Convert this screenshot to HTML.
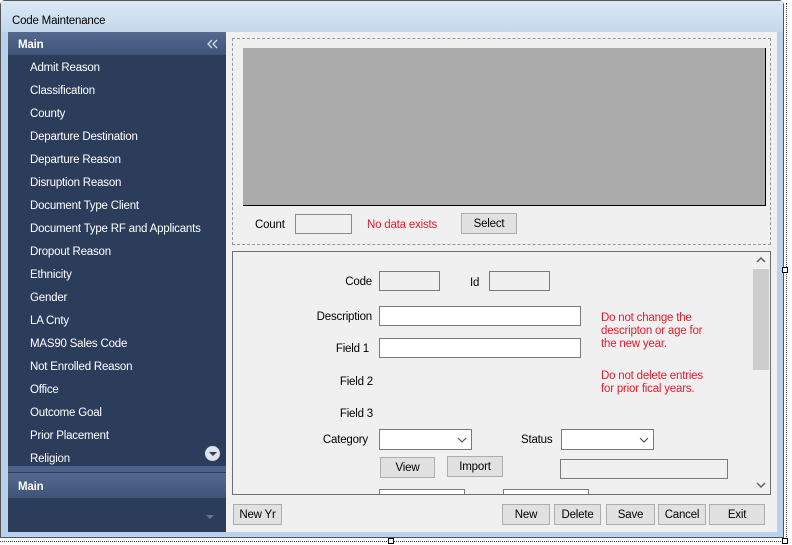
<!DOCTYPE html>
<html><head><style>
*{margin:0;padding:0;box-sizing:border-box}
body{width:792px;height:545px;background:#fff;position:relative;overflow:hidden;font-family:"Liberation Sans",sans-serif;font-size:11.5px;color:#000;letter-spacing:-0.2px}
.a{position:absolute}
.nav{color:#fff;font-size:11.5px;left:30px}
.lbl{position:absolute;white-space:nowrap;margin-top:2px}
.r{position:absolute;white-space:nowrap;text-align:right;width:120px;margin-top:2px}
.box{position:absolute;border:1px solid #7a7a7a;background:#f0f0f0}
.wbox{position:absolute;border:1px solid #7a7a7a;background:#fff}
.btn{position:absolute;border:1px solid #adadad;background:#e1e1e1;text-align:center;line-height:20px}
.red{position:absolute;color:#f01828;line-height:13px;margin-top:1px}
svg{position:absolute}
</style></head><body>
<div class="a" style="left:0;top:0;width:784px;height:538px;border:1px solid #555;background:#b9d1ea;border-radius:5px 5px 0 0"></div>
<div class="a" style="left:1px;top:1px;width:782px;height:31px;background:linear-gradient(#dbe8f5,#c4d8ed)"></div>
<div class="lbl" style="left:12px;top:13px">Code Maintenance</div>
<div class="a" style="left:8px;top:32px;width:218px;height:500px;background:#2c3d5c"></div>
<div class="a" style="left:8px;top:32px;width:218px;height:23px;background:linear-gradient(#55698e,#3f5479)"></div>
<div class="lbl" style="left:18px;top:37px;color:#fff;font-weight:bold">Main</div>
<svg style="left:207px;top:39px" width="12" height="10"><path d="M5 1L1 5L5 9M10 1L6 5L10 9" stroke="#d5deea" stroke-width="1.3" fill="none"/></svg>
<div class="lbl nav" style="top:60px">Admit Reason</div>
<div class="lbl nav" style="top:83px">Classification</div>
<div class="lbl nav" style="top:106px">County</div>
<div class="lbl nav" style="top:129px">Departure Destination</div>
<div class="lbl nav" style="top:152px">Departure Reason</div>
<div class="lbl nav" style="top:175px">Disruption Reason</div>
<div class="lbl nav" style="top:198px">Document Type Client</div>
<div class="lbl nav" style="top:221px">Document Type RF and Applicants</div>
<div class="lbl nav" style="top:244px">Dropout Reason</div>
<div class="lbl nav" style="top:267px">Ethnicity</div>
<div class="lbl nav" style="top:290px">Gender</div>
<div class="lbl nav" style="top:313px">LA Cnty</div>
<div class="lbl nav" style="top:336px">MAS90 Sales Code</div>
<div class="lbl nav" style="top:359px">Not Enrolled Reason</div>
<div class="lbl nav" style="top:382px">Office</div>
<div class="lbl nav" style="top:405px">Outcome Goal</div>
<div class="lbl nav" style="top:428px">Prior Placement</div>
<div class="lbl nav" style="top:451px">Religion</div>
<div class="a" style="left:205px;top:446px;width:15px;height:15px;border-radius:50%;background:#dde3ec"></div>
<div class="a" style="left:209px;top:452px;width:0;height:0;border-left:4px solid transparent;border-right:4px solid transparent;border-top:4px solid #2c3d5c"></div>
<div class="a" style="left:8px;top:466px;width:218px;height:6px;background:#4d6288"></div>
<div class="a" style="left:8px;top:472px;width:218px;height:26px;background:linear-gradient(#55698e,#3f5479);border-top:1px solid #2c3d5c"></div>
<div class="lbl" style="left:18px;top:479px;color:#fff;font-weight:bold">Main</div>
<div class="a" style="left:206px;top:515px;width:0;height:0;border-left:4px solid transparent;border-right:4px solid transparent;border-top:4px solid #66748e"></div>
<div class="a" style="left:226px;top:32px;width:551px;height:500px;background:#f0f0f0"></div>
<div class="a" style="left:232px;top:38px;width:539px;height:207px;border:1px dashed #999"></div>
<div class="a" style="left:243px;top:48px;width:523px;height:158px;background:#ababab;border-bottom:1px solid #000;border-right:1px solid #000"></div>
<div class="lbl" style="left:255px;top:217px">Count</div>
<div class="box" style="left:295px;top:214px;width:57px;height:20px;border-color:#8a8a8a"></div>
<div class="lbl" style="left:367px;top:217px;color:#f01828">No data exists</div>
<div class="btn" style="left:461px;top:213px;width:56px;height:21px">Select</div>
<div class="a" style="left:232px;top:251px;width:539px;height:244px;border:1px solid #707070"></div>
<div class="a" style="left:753px;top:252px;width:17px;height:242px;background:#f0f0f0"></div>
<div class="a" style="left:753px;top:269px;width:16px;height:101px;background:#cdcdcd"></div>
<svg style="left:756px;top:257px" width="10" height="7"><path d="M1 5L5 1L9 5" stroke="#606060" stroke-width="1.5" fill="none"/></svg>
<svg style="left:756px;top:482px" width="10" height="7"><path d="M1 1L5 5L9 1" stroke="#606060" stroke-width="1.5" fill="none"/></svg>
<div class="r" style="left:252px;top:274px">Code</div>
<div class="box" style="left:379px;top:271px;width:61px;height:20px"></div>
<div class="lbl" style="left:470px;top:275px">Id</div>
<div class="box" style="left:489px;top:271px;width:61px;height:20px"></div>
<div class="r" style="left:252px;top:309px">Description</div>
<div class="wbox" style="left:379px;top:306px;width:202px;height:20px"></div>
<div class="r" style="left:249px;top:341px">Field 1</div>
<div class="wbox" style="left:379px;top:338px;width:202px;height:20px"></div>
<div class="red" style="left:601px;top:311px">Do not change the<br>descripton or age for<br>the new year.</div>
<div class="red" style="left:601px;top:369px">Do not delete entries<br>for prior fical years.</div>
<div class="r" style="left:253px;top:374px">Field 2</div>
<div class="r" style="left:253px;top:406px">Field 3</div>
<div class="r" style="left:248px;top:432px">Category</div>
<div class="wbox" style="left:379px;top:429px;width:93px;height:21px"></div>
<svg style="left:457px;top:437px" width="10" height="6"><path d="M1 1L5 5L9 1" stroke="#555" stroke-width="1.2" fill="none"/></svg>
<div class="lbl" style="left:521px;top:432px">Status</div>
<div class="wbox" style="left:561px;top:429px;width:93px;height:21px"></div>
<svg style="left:639px;top:437px" width="10" height="6"><path d="M1 1L5 5L9 1" stroke="#555" stroke-width="1.2" fill="none"/></svg>
<div class="btn" style="left:380px;top:457px;width:55px;height:21px">View</div>
<div class="btn" style="left:447px;top:456px;width:56px;height:21px">Import</div>
<div class="box" style="left:560px;top:459px;width:168px;height:20px"></div>
<div class="wbox" style="left:379px;top:489px;width:86px;height:5px;border-bottom:none"></div>
<div class="wbox" style="left:503px;top:489px;width:86px;height:5px;border-bottom:none"></div>
<div class="btn" style="left:233px;top:504px;width:49px;height:21px">New Yr</div>
<div class="btn" style="left:502px;top:504px;width:48px;height:21px">New</div>
<div class="btn" style="left:554px;top:504px;width:47px;height:21px">Delete</div>
<div class="btn" style="left:606px;top:504px;width:49px;height:21px">Save</div>
<div class="btn" style="left:658px;top:504px;width:48px;height:21px">Cancel</div>
<div class="btn" style="left:709px;top:504px;width:56px;height:21px">Exit</div>
<div class="a" style="left:786px;top:3px;width:0;height:538px;border-left:1px dotted #444"></div>
<div class="a" style="left:0;top:541px;width:787px;height:0;border-top:1px dotted #444"></div>
<div class="a" style="left:782px;top:267px;width:6px;height:6px;border:1px solid #000;background:#fff"></div>
<div class="a" style="left:782px;top:538px;width:6px;height:6px;border:1px solid #000;background:#fff"></div>
<div class="a" style="left:388px;top:538px;width:6px;height:6px;border:1px solid #000;background:#fff"></div>
</body></html>
